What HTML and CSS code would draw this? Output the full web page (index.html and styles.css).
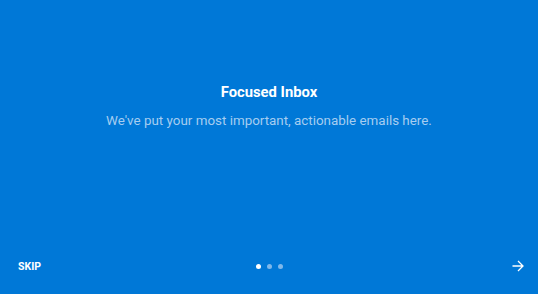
FILE: index.html
```html
<!DOCTYPE html>
<html lang="en">
<head>
  <meta charset="UTF-8" />
  <title>Focused Inbox</title>
  <link rel="stylesheet" href="styles.css">
</head>
<body>
  <div class="screen">
    <div class="intro">
      <h1>Focused Inbox</h1>
      <p>We've put your most important, actionable emails here.</p>
    </div>

    <div class="footer">
      <span class="skip">SKIP</span>
      <div class="dots">
        <span class="dot active"></span>
        <span class="dot"></span>
        <span class="dot"></span>
      </div>
      <span class="next">
        <svg width="12" height="12" viewBox="0 0 12 12" fill="none" stroke="#fff" stroke-width="1.3">
          <path d="M0.5 6h10.5M6 1l5 5-5 5" />
        </svg>
      </span>
    </div>
  </div>
</body>
</html>
```

FILE: styles.css
```css
* { box-sizing: border-box; }

html, body { height: 100%; }

body {
  margin: 0;
  font-family: Roboto, 'Liberation Sans', sans-serif;
  background-color: #0078d7;
  color: #fff;
}

.screen {
  height: 100%;
  display: flex;
  flex-direction: column;
}

.intro {
  flex: 1;
  text-align: center;
  padding-top: 82px;
}

.intro h1 {
  margin: 0;
  font-size: 14.8px;
  font-weight: 700;
  line-height: 20px;
}

.intro p {
  margin: 10px 0 0;
  font-size: 13.4px;
  line-height: 18px;
  color: #a6cdf0;
}

.footer {
  display: grid;
  grid-template-columns: 1fr auto 1fr;
  align-items: center;
  height: 56px;
  padding: 0 14px;
}

.skip {
  font-size: 10.5px;
  font-weight: 700;
  padding-left: 4px;
}

.dots {
  display: flex;
  gap: 6px;
}

.dot {
  width: 5px;
  height: 5px;
  border-radius: 50%;
  background: #7fb8ea;
}

.dot.active { background: #fff; }

.next {
  display: flex;
  justify-content: flex-end;
}
```
